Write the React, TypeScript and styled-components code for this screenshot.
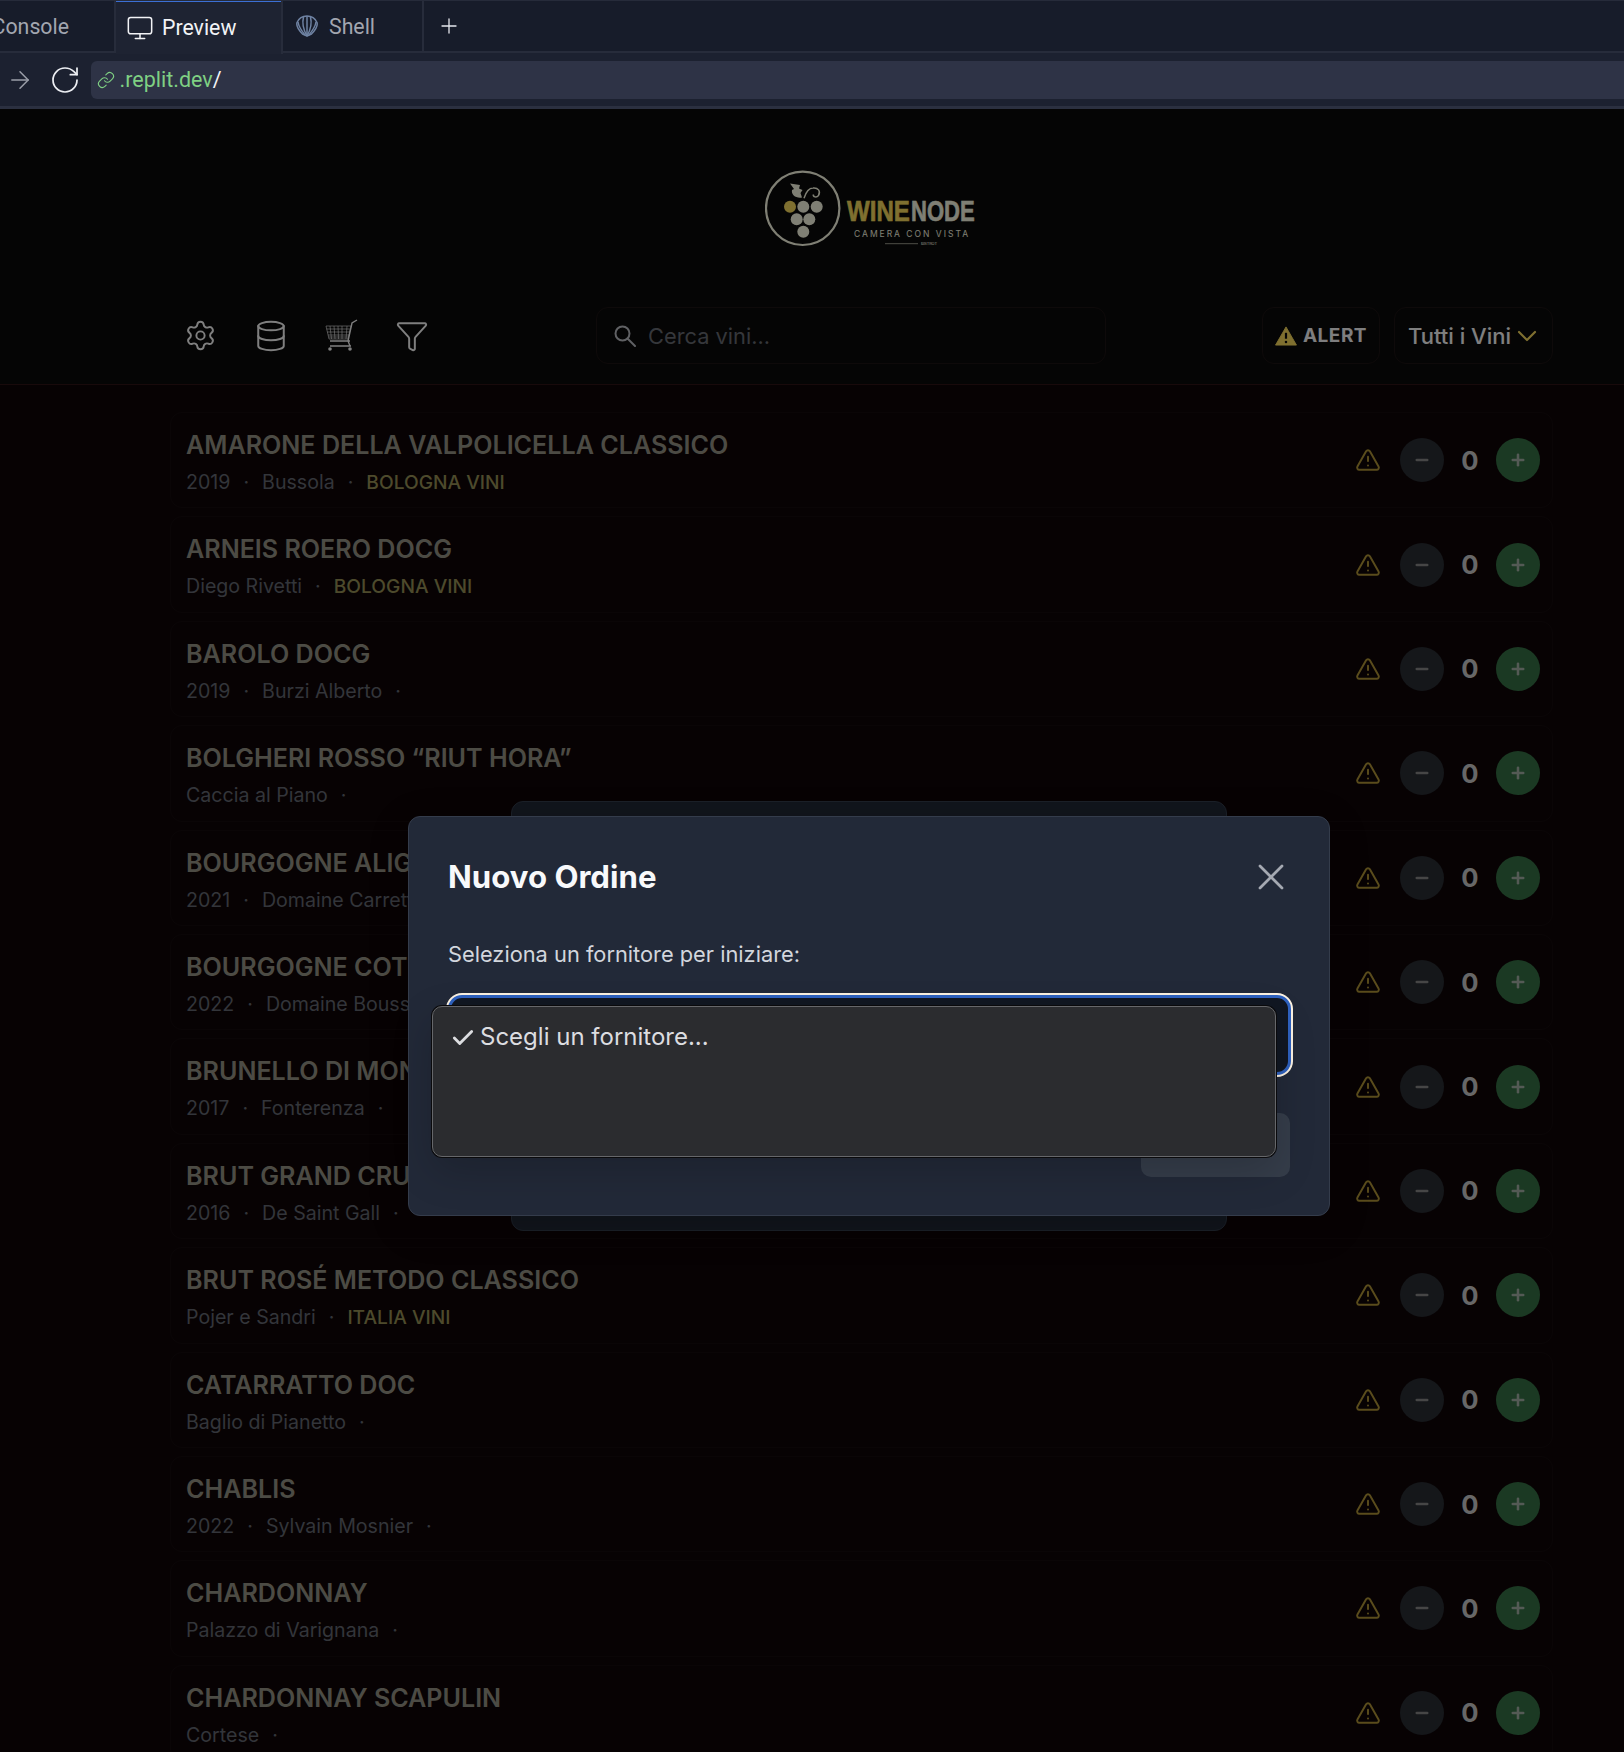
import React from 'react';
import styled, { createGlobalStyle } from 'styled-components';
import {
    ArrowRight,
    Check,
    ChevronDown,
    Database,
    Filter,
    Link,
    Minus,
    Monitor,
    Plus,
    RotateCw,
    Settings,
    TriangleAlert,
    X
} from 'lucide-react';

const GlobalStyle = createGlobalStyle`
    html, body {
        margin: 0;
        width: 1624px;
        height: 1752px;
        overflow: hidden;
        background: #000;
        font-family: Inter, "Noto Sans", sans-serif;
    }
`;

const Frame = styled.div`
    display: flex;
    flex-direction: column;
    width: 1624px;
    height: 1752px;
    overflow: hidden;
`;

/* browser chrome */
const TabBar = styled.div`
    display: flex;
    height: 53px;
    flex: none;
    background: #171c2a;
    border-top: 1px solid #262b3a;
    box-sizing: border-box;
`;
const Tab = styled.div<{ $active?: boolean; $width: number; $inset: number }>`
    display: flex;
    align-items: center;
    gap: 10px;
    width: ${p => p.$width}px;
    flex: none;
    box-sizing: border-box;
    padding-left: ${p => p.$inset}px;
    font-size: 21.3px;
    font-family: Roboto, sans-serif;
    color: ${p => (p.$active ? '#f2f3f6' : '#a2a6b0')};
    background: ${p => (p.$active ? '#1e2332' : 'transparent')};
    border-right: 2px solid #272c3b;
    border-bottom: ${p => (p.$active ? 'none' : '2px solid #272c3b')};
    ${p => p.$active && 'box-shadow: inset 0 1px 0 #3b6fd4; height: 53px; z-index: 1;'}
`;
const ClippedTab = styled(Tab)`
    justify-content: flex-end;
    padding: 0 45px 0 0;
    overflow: hidden;
    white-space: nowrap;
`;
const TabMonitor = styled(Monitor)`
    margin-right: -2px;
`;
const PlusCell = styled.div`
    flex: 1;
    display: flex;
    align-items: center;
    padding-left: 13px;
    color: #e6e8ee;
    border-bottom: 2px solid #272c3b;
`;
const AddressBar = styled.div`
    display: flex;
    align-items: center;
    height: 56px;
    flex: none;
    box-sizing: border-box;
    padding-left: 6px;
    background: #1c2130;
    border-bottom: 3px solid #2b3040;
`;
const NavIcons = styled.div`
    display: flex;
    align-items: center;
    gap: 15px;
    width: 84.5px;
    flex: none;
`;
const UrlField = styled.div`
    flex: 1;
    display: flex;
    align-items: center;
    gap: 5px;
    height: 38px;
    padding-left: 6px;
    background: #2e3346;
    border-radius: 6px 0 0 6px;
    font-family: Roboto, sans-serif;
    font-size: 21.5px;
    color: #7fd083;
    span {
        color: #f2f3f6;
    }
`;

/* page under the dialog */
const Page = styled.div`
    position: relative;
    flex: 1;
    overflow: hidden;
    background: #0e0507;
`;
const Header = styled.header`
    display: flex;
    flex-direction: column;
    height: 276px;
    box-sizing: border-box;
    padding: 59px 71px 0 186px;
    background: #0a0a0a;
    border-bottom: 1px solid #301416;
`;
const LogoRow = styled.div`
    display: flex;
    justify-content: center;
    height: 80px;
    padding-left: 2px;
`;
const Toolbar = styled.div`
    display: flex;
    align-items: center;
    height: 57px;
    margin-top: 59px;
`;
const ToolIcons = styled.div`
    display: flex;
    align-items: center;
    width: 410px;
    margin-left: -21px;
    padding-right: 21px;
    flex: none;
    color: #fff;
`;
const ToolSlot = styled.div`
    display: flex;
    justify-content: center;
    width: 70.5px;
`;
const SearchBox = styled.div`
    display: flex;
    align-items: center;
    gap: 12px;
    width: 510px;
    height: 57px;
    box-sizing: border-box;
    padding-left: 17px;
    border: 1px solid #1c1414;
    border-radius: 12px;
    font-size: 21.8px;
    color: #6b6e76;
`;
const PillGroup = styled.div`
    display: flex;
    gap: 14px;
    margin-left: 156px;
`;
const Pill = styled.div<{ $width: number }>`
    display: flex;
    align-items: center;
    justify-content: center;
    gap: 6px;
    width: ${p => p.$width}px;
    height: 57px;
    box-sizing: border-box;
    border: 1px solid #1c1414;
    border-radius: 12px;
    color: #fff;
`;
const AlertLabel = styled.span`
    font-size: 19px;
    font-weight: 700;
    letter-spacing: 0.5px;
    color: #fdfdff;
`;
const FilterLabel = styled.span`
    font-size: 22px;
    font-weight: 500;
    color: #fff;
`;
const FilterChevron = styled(ChevronDown)`
    margin: 0 -4px 0 -6px;
    color: #ffe060;
`;
const WineList = styled.div`
    display: flex;
    flex-direction: column;
    gap: 8px;
    width: 1383px;
    margin: 27px 0 0 170px;
`;
const Row = styled.div`
    display: flex;
    align-items: center;
    justify-content: space-between;
    height: 96.4px;
    flex: none;
    box-sizing: border-box;
    padding: 0 12px 0 15px;
    border: 1px solid #150b0d;
    border-radius: 12px;
`;
const RowText = styled.div`
    align-self: flex-start;
    padding-top: 16px;
`;
const WineName = styled.div`
    font-size: 25.1px;
    font-weight: 600;
    line-height: 32px;
    color: #989689;
`;
const Meta = styled.div`
    display: flex;
    gap: 13px;
    margin-top: 5px;
    font-size: 19.6px;
    line-height: 32px;
    color: #666a74;
`;
const Supplier = styled.span`
    font-weight: 500;
    font-size: 19.2px;
    color: #9a9458;
`;
const Controls = styled.div`
    display: flex;
    align-items: center;
`;
const RoundButton = styled.div<{ $add?: boolean }>`
    display: flex;
    align-items: center;
    justify-content: center;
    width: 44px;
    height: 44px;
    border-radius: 50%;
    background: ${p => (p.$add ? '#367346' : '#2a2e34')};
    color: ${p => (p.$add ? '#a8b4aa' : '#8c8c8c')};
`;
const Count = styled.div`
    width: 52px;
    text-align: center;
    font-size: 25.6px;
    font-weight: 700;
    color: #cfcfcf;
`;
const WarnIcon = styled.div`
    display: flex;
    margin-right: 19px;
    color: #b49838;
`;
const Overlay = styled.div`
    position: absolute;
    inset: 0;
    background: rgba(0, 0, 0, 0.5);
`;

/* dialog stack */
const BackDialog = styled.div`
    position: absolute;
    left: 511px;
    top: 692px;
    width: 716px;
    height: 430px;
    box-sizing: border-box;
    background: #11151c;
    border: 1px solid #1b2028;
    border-radius: 12px;
`;
const Dialog = styled.div`
    position: absolute;
    left: 408px;
    top: 707px;
    width: 922px;
    height: 400px;
    box-sizing: border-box;
    padding: 38px 39px 0 39px;
    background: #222938;
    border: 1px solid #343c4b;
    border-radius: 12px;
    box-shadow: 0 10px 40px rgba(0, 0, 0, 0.2);
`;
const DialogHead = styled.div`
    display: flex;
    align-items: center;
    justify-content: space-between;
    margin-right: -3px;
`;
const DialogTitle = styled.h2`
    margin: 0;
    font-size: 31.2px;
    font-weight: 700;
    line-height: 40px;
    color: #f8f9fb;
`;
const DialogLabel = styled.div`
    margin-top: 38.5px;
    font-size: 21.8px;
    line-height: 32px;
    color: #d2d6dd;
`;
const SelectField = styled.div`
    margin-top: 25.5px;
    width: 843px;
    height: 80px;
    box-sizing: border-box;
    background: #111722;
    border: 3px solid #2f62c0;
    border-radius: 14px;
    box-shadow: 0 0 0 2px #fdf3e2;
`;
const DialogActions = styled.div`
    display: flex;
    justify-content: flex-end;
    margin-top: 38px;
`;
const NextButton = styled.div`
    width: 149px;
    height: 64px;
    background: #353d4a;
    border-radius: 10px;
`;
const OptionMenu = styled.div`
    position: absolute;
    left: 432px;
    top: 897px;
    width: 844px;
    height: 151px;
    box-sizing: border-box;
    padding: 14px 0 0 17px;
    display: flex;
    align-items: flex-start;
    gap: 4px;
    background: #2b2c2f;
    border: 1.5px solid #66676a;
    border-radius: 10px;
    box-shadow: 0 0 0 1px #0a0a0c, 0 14px 40px rgba(0, 0, 0, 0.18);
    font-size: 24px;
    line-height: 32px;
    color: #dcdde0;
`;
const OptionCheck = styled(Check)`
    margin-top: 4px;
`;

const wines = [
    { name: 'AMARONE DELLA VALPOLICELLA CLASSICO', year: '2019', maker: 'Bussola', supplier: 'BOLOGNA VINI' },
    { name: 'ARNEIS ROERO DOCG', maker: 'Diego Rivetti', supplier: 'BOLOGNA VINI' },
    { name: 'BAROLO DOCG', year: '2019', maker: 'Burzi Alberto' },
    { name: 'BOLGHERI ROSSO “RIUT HORA”', maker: 'Caccia al Piano' },
    { name: 'BOURGOGNE ALIGOTÉ', year: '2021', maker: 'Domaine Carrette' },
    { name: 'BOURGOGNE COTE D’OR', year: '2022', maker: 'Domaine Boussey' },
    { name: 'BRUNELLO DI MONTALCINO', year: '2017', maker: 'Fonterenza' },
    { name: 'BRUT GRAND CRU', year: '2016', maker: 'De Saint Gall' },
    { name: 'BRUT ROSÉ METODO CLASSICO', maker: 'Pojer e Sandri', supplier: 'ITALIA VINI' },
    { name: 'CATARRATTO DOC', maker: 'Baglio di Pianetto' },
    { name: 'CHABLIS', year: '2022', maker: 'Sylvain Mosnier' },
    { name: 'CHARDONNAY', maker: 'Palazzo di Varignana' },
    { name: 'CHARDONNAY SCAPULIN', maker: 'Cortese' }
];

const ShellIcon = () => (
    <svg width="24" height="24" viewBox="0 0 24 24" fill="none" stroke="#6f83a3" strokeWidth="1.5" strokeLinejoin="round">
        <path d="M12 22 L7.5 20 C3.5 16 1 12 2 8.5 C4 4 8 2 12 2 C16 2 20 4 22 8.5 C23 12 20.5 16 16.5 20 Z" />
        <path d="M12 22 C8.5 16 7 9 8.5 3" />
        <path d="M12 22 C15.5 16 17 9 15.5 3" />
        <path d="M12 22 L12 2" />
        <path d="M10 21 C6 16 3.5 12 3 8" />
        <path d="M14 21 C18 16 20.5 12 21 8" />
    </svg>
);

const CartIcon = () => (
    <svg width="34" height="34" viewBox="0 0 34 34" fill="none" stroke="#fff">
        <g strokeWidth="0.6">
            <path d="M2 7 L27 7 L24 20 L5 20 Z" />
            <path d="M2.5 10 H26.5 M3.3 13 H25.8 M4 16 H25 M4.6 18 H24.5" />
            <path d="M6 7 L7.5 20 M10 7 L11 20 M14 7 L14.5 20 M18 7 L18 20 M23 7 L22 20" />
        </g>
        <path d="M33 1 L28 4 L24 22 L26 27 M6 22 L26 22 M6 27 L27 27" strokeWidth="1.4" />
        <circle cx="6" cy="30" r="1.8" fill="#fff" stroke="none" />
        <circle cx="26" cy="30" r="1.8" fill="#fff" stroke="none" />
    </svg>
);

const SearchGlyph = () => (
    <svg width="22" height="22" viewBox="0 0 22 22" fill="none" stroke="#c0c2c8" strokeWidth="2" strokeLinecap="round">
        <circle cx="8.5" cy="8.5" r="7" />
        <path d="M13.5 13.5 L21 21" />
    </svg>
);

const AlertTriangle = () => (
    <svg width="22" height="20" viewBox="0 0 24 22">
        <path d="M12 1 L23.5 21 H0.5 Z" fill="#ffe060" stroke="#ffe060" strokeLinejoin="round" />
        <path d="M12 7.5 V14" stroke="#0a0a0a" strokeWidth="2.4" />
        <circle cx="12" cy="17.5" r="1.4" fill="#0a0a0a" />
    </svg>
);

const LOGO_GOLD = '#ffe060';
const LOGO_CREAM = '#ffffe8';
const LOGO_FONT = '"Liberation Sans", sans-serif';

const Logo = () => (
    <svg width="212" height="80" viewBox="0 0 212 80">
        <circle cx="37.7" cy="40.3" r="36.7" fill="none" stroke={LOGO_CREAM} strokeWidth="2.2" />
        <path d="M25 15.5 L35 17 L34 20.5 L37.5 22 L35.5 25 L37 29.5 C31 30.5 26 27 27 22 L29 21 Z" fill={LOGO_CREAM} />
        <path d="M39 30.3 C41 24 44 20 48 20 C53 19.5 56 23 53.5 27.5 C51.5 30 48 29 48.3 26.5" fill="none" stroke={LOGO_CREAM} strokeWidth="1.5" />
        <circle cx="25" cy="38.7" r="6" fill={LOGO_GOLD} />
        <circle cx="38.3" cy="38.7" r="6" fill={LOGO_CREAM} />
        <circle cx="51.7" cy="38.7" r="6" fill={LOGO_CREAM} />
        <circle cx="31.7" cy="51.3" r="6" fill={LOGO_CREAM} />
        <circle cx="44.3" cy="51.3" r="6" fill={LOGO_CREAM} />
        <circle cx="38.3" cy="63.7" r="6" fill={LOGO_CREAM} />
        <text transform="translate(82 53) scale(0.83 1)" fontFamily={LOGO_FONT} fontSize="29" fontWeight="700" fill={LOGO_GOLD} stroke={LOGO_GOLD} strokeWidth="0.6">
            WINE
        </text>
        <text transform="translate(146 53) scale(0.76 1)" fontFamily={LOGO_FONT} fontSize="29" fontWeight="700" fill={LOGO_CREAM} stroke={LOGO_CREAM} strokeWidth="0.6">
            NODE
        </text>
        <text x="89" y="68.7" fontFamily="Inter, sans-serif" fontSize="8.5" fill={LOGO_CREAM} textLength="114">
            CAMERA CON VISTA
        </text>
        <path d="M120 75.7 H153" stroke={LOGO_CREAM} strokeWidth="0.6" />
        <text x="156" y="77.2" fontFamily="Inter, sans-serif" fontSize="4" fill={LOGO_CREAM} textLength="16">
            BISTROT
        </text>
    </svg>
);

const App: React.FC = () => (
    <Frame>
        <GlobalStyle />
        <TabBar>
            <ClippedTab $width={116} $inset={0}>Console</ClippedTab>
            <Tab $active $width={167} $inset={10}>
                <TabMonitor size={28} strokeWidth={1.3} />
                Preview
            </Tab>
            <Tab $width={141} $inset={12}>
                <ShellIcon />
                Shell
            </Tab>
            <PlusCell>
                <Plus size={24} strokeWidth={1.3} />
            </PlusCell>
        </TabBar>
        <AddressBar>
            <NavIcons>
                <ArrowRight size={28} strokeWidth={1.3} color="#9a9ea8" />
                <RotateCw size={32} strokeWidth={1.3} color="#eceef2" />
            </NavIcons>
            <UrlField>
                <Link size={18} strokeWidth={1.5} color="#7fd083" />
                <div>
                    .replit.dev<span>/</span>
                </div>
            </UrlField>
        </AddressBar>
        <Page>
            <Header>
                <LogoRow>
                    <Logo />
                </LogoRow>
                <Toolbar>
                    <ToolIcons>
                        <ToolSlot>
                            <Settings size={33} strokeWidth={1.4} />
                        </ToolSlot>
                        <ToolSlot>
                            <Database size={34} strokeWidth={1.4} />
                        </ToolSlot>
                        <ToolSlot>
                            <CartIcon />
                        </ToolSlot>
                        <ToolSlot>
                            <Filter size={34} strokeWidth={1.4} />
                        </ToolSlot>
                    </ToolIcons>
                    <SearchBox>
                        <SearchGlyph />
                        Cerca vini...
                    </SearchBox>
                    <PillGroup>
                        <Pill $width={118}>
                            <AlertTriangle />
                            <AlertLabel>ALERT</AlertLabel>
                        </Pill>
                        <Pill $width={159}>
                            <FilterLabel>Tutti i Vini</FilterLabel>
                            <FilterChevron size={32} strokeWidth={1.6} />
                        </Pill>
                    </PillGroup>
                </Toolbar>
            </Header>
            <WineList>
                {wines.map(wine => (
                    <Row key={wine.name}>
                        <RowText>
                            <WineName>{wine.name}</WineName>
                            <Meta>
                                {wine.year && <span>{wine.year}</span>}
                                {wine.year && <span>·</span>}
                                <span>{wine.maker}</span>
                                <span>·</span>
                                {wine.supplier && <Supplier>{wine.supplier}</Supplier>}
                            </Meta>
                        </RowText>
                        <Controls>
                            <WarnIcon>
                                <TriangleAlert size={26} strokeWidth={1.8} />
                            </WarnIcon>
                            <RoundButton>
                                <Minus size={18} strokeWidth={3.4} />
                            </RoundButton>
                            <Count>0</Count>
                            <RoundButton $add>
                                <Plus size={18} strokeWidth={3.4} />
                            </RoundButton>
                        </Controls>
                    </Row>
                ))}
            </WineList>
            <Overlay />
            <BackDialog />
            <Dialog>
                <DialogHead>
                    <DialogTitle>Nuovo Ordine</DialogTitle>
                    <X size={44} strokeWidth={1.5} color="#a5a9b2" />
                </DialogHead>
                <DialogLabel>Seleziona un fornitore per iniziare:</DialogLabel>
                <SelectField />
                <DialogActions>
                    <NextButton />
                </DialogActions>
            </Dialog>
            <OptionMenu>
                <OptionCheck size={26} strokeWidth={2.6} />
                Scegli un fornitore...
            </OptionMenu>
        </Page>
    </Frame>
);

export default App;
